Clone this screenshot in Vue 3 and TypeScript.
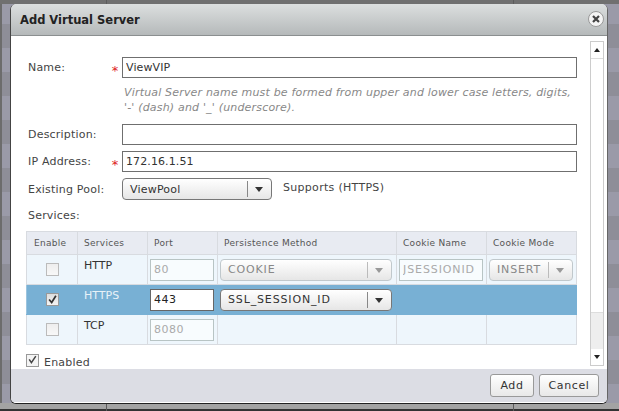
<script setup lang="ts">
interface Row {
  name: string
  port: string
  checked?: boolean
  active?: boolean
  method?: string
  cookie?: string
  mode?: string
}

const rows: Row[] = [
  { name: 'HTTP', port: '80', method: 'COOKIE', cookie: 'JSESSIONID', mode: 'INSERT' },
  { name: 'HTTPS', port: '443', checked: true, active: true, method: 'SSL_SESSION_ID' },
  { name: 'TCP', port: '8080' },
]
</script>

<template>
  <div class="page">
    <div class="dialog">
      <header class="title">
        <span>Add Virtual Server</span>
        <button class="close" aria-label="Close">
          <svg width="10" height="10" viewBox="0 0 10 10">
            <path d="M2 2l6 6M8 2l-6 6" stroke="#444" stroke-width="2.2" fill="none" />
          </svg>
        </button>
      </header>

      <div class="body">
        <div class="content">
          <div class="field">
            <label>Name:</label>
            <i class="req">*</i>
            <input class="text" value="ViewVIP" />
          </div>
          <p class="hint">
            Virtual Server name must be formed from upper and lower case letters, digits,<br />
            '-' (dash) and '_' (underscore).
          </p>
          <div class="field">
            <label>Description:</label>
            <i class="req"></i>
            <input class="text" value="" />
          </div>
          <div class="field ip">
            <label>IP Address:</label>
            <i class="req">*</i>
            <input class="text" value="172.16.1.51" />
          </div>
          <div class="field pool">
            <label>Existing Pool:</label>
            <i class="req"></i>
            <div class="select pool-select">
              <span class="value">ViewPool</span>
              <span class="arrow"></span>
            </div>
            <span class="supports">Supports (HTTPS)</span>
          </div>
          <div class="services">Services:</div>

          <table class="grid">
            <thead>
              <tr>
                <th class="c-enable">Enable</th>
                <th class="c-service">Services</th>
                <th class="c-port">Port</th>
                <th class="c-method">Persistence Method</th>
                <th class="c-cookie">Cookie Name</th>
                <th class="c-mode">Cookie Mode</th>
              </tr>
            </thead>
            <tbody>
              <tr v-for="row in rows" :key="row.name" :class="{ active: row.active }">
                <td class="center">
                  <span class="check" :class="{ on: row.checked }">
                    <svg v-if="row.checked" width="13" height="13" viewBox="0 0 13 13">
                      <path d="M2.5 6.5l3 3.5 5-8" stroke="#333" stroke-width="2" fill="none" />
                    </svg>
                  </span>
                </td>
                <td class="name">{{ row.name }}</td>
                <td class="pad">
                  <input class="cell-input" :disabled="!row.active" :value="row.port" />
                </td>
                <td class="pad">
                  <div v-if="row.method" class="select method" :class="{ off: !row.active }">
                    <span class="value">{{ row.method }}</span>
                    <span class="arrow"></span>
                  </div>
                </td>
                <td class="pad">
                  <input v-if="row.cookie" class="cell-input cookie" disabled :value="row.cookie" />
                </td>
                <td class="pad">
                  <div v-if="row.mode" class="select mode off">
                    <span class="value">{{ row.mode }}</span>
                    <span class="arrow"></span>
                  </div>
                </td>
              </tr>
            </tbody>
          </table>

          <div class="enabled">
            <span class="check plain">
              <svg width="15" height="15" viewBox="0 0 15 15">
                <path d="M3 6l3 4.5 6-9" stroke="#444" stroke-width="2" fill="none" />
              </svg>
            </span>
            <span class="enabled-text">Enabled</span>
          </div>
        </div>

        <div class="scrollbar">
          <span class="btn"><b class="up"></b></span>
          <span class="thumb"></span>
          <span class="rest"></span>
          <span class="btn"><b class="down"></b></span>
        </div>
      </div>

      <footer class="footer">
        <button class="action add">Add</button>
        <button class="action cancel">Cancel</button>
      </footer>
    </div>
  </div>
</template>

<style>
html,
body {
  margin: 0;
  background: #8c8c94;
}
</style>

<style scoped>
.page {
  width: 619px;
  height: 411px;
  box-sizing: border-box;
  padding: 4px 11px 8px 10px;
  background:
    linear-gradient(#5c5c5c, #5c5c5c) 106px 0 / 1px 4px no-repeat,
    linear-gradient(#5c5c5c, #5c5c5c) 513px 0 / 1px 4px no-repeat,
    linear-gradient(#5c5c5c, #5c5c5c) 106px 403px / 1px 8px no-repeat,
    linear-gradient(#5c5c5c, #5c5c5c) 513px 403px / 1px 8px no-repeat,
    linear-gradient(#707070, #707070) 0 0 / 100% 4px no-repeat,
    linear-gradient(#333, #333) 0 409px / 100% 2px no-repeat,
    linear-gradient(#a3a3a3, #a3a3a3) 0 403px / 100% 6px no-repeat,
    linear-gradient(#6c6c6c, #6c6c6c) 0 0 / 2px 100% no-repeat,
    repeating-linear-gradient(180deg, #9a9aa8 0 24px, #8e8e98 24px 48px);
  font-family: "DejaVu Sans", Verdana, sans-serif;
  font-size: 11px;
  color: #333;
  overflow: hidden;
}

.dialog {
  height: 100%;
  display: flex;
  flex-direction: column;
  background: #fff;
  border-left: 1px solid #444;
  border-right: 1px solid #666;
  border-bottom: 1px solid #222;
  border-radius: 6px;
  overflow: hidden;
}

.title {
  height: 32px;
  flex: none;
  box-sizing: border-box;
  display: flex;
  align-items: center;
  justify-content: space-between;
  padding: 0 3px 0 9px;
  background: linear-gradient(180deg, #dcdfdf, #b5b9ba);
  border-bottom: 1px solid #8b8f90;
  font-size: 11.5px;
  font-weight: bold;
  color: #222;
}

.close {
  width: 16px;
  height: 16px;
  margin-top: -2px;
  padding: 0;
  display: flex;
  align-items: center;
  justify-content: center;
  border: 1px solid #999;
  border-radius: 50%;
  background: #f4f4f4;
}

.body {
  flex: 1;
  min-height: 0;
  display: flex;
  overflow: hidden;
}

.content {
  flex: 1;
  min-width: 0;
  padding: 21px 0 0 17px;
  overflow: hidden;
}

.field {
  display: flex;
  align-items: center;
  height: 21px;
  color: #444;
}

.field label {
  width: 82px;
  letter-spacing: 0.2px;
}

.req {
  width: 10px;
  margin-right: 2px;
  color: #d22;
  font-style: normal;
  font-size: 13px;
  line-height: 13px;
  padding-top: 3px;
  text-align: center;
  height: 10px;
}

.text {
  width: 455px;
  height: 21px;
  box-sizing: border-box;
  border: 1px solid #6f6f6f;
  padding: 0 3px;
  font: inherit;
  letter-spacing: 0.1px;
  color: #333;
  outline: none;
  background: #fff;
}

.hint {
  margin: 0 0 0 96px;
  height: 46px;
  box-sizing: border-box;
  padding-top: 7px;
  line-height: 15px;
  font-style: italic;
  font-size: 11px;
  letter-spacing: 0.18px;
  color: #888;
  white-space: nowrap;
}

.ip {
  margin-top: 6px;
}

.pool {
  margin-top: 6px;
  height: 22px;
}

.select {
  display: flex;
  align-items: center;
  box-sizing: border-box;
  border: 1px solid #777;
  border-radius: 4px;
  background: linear-gradient(180deg, #fff, #e6e6e6);
  color: #333;
}

.select .value {
  flex: 1;
  padding-left: 7px;
  letter-spacing: 0.2px;
  white-space: nowrap;
  overflow: hidden;
}

.grid .select .value {
  letter-spacing: 0.85px;
}

.select .arrow {
  flex: none;
  width: 23px;
  height: 16px;
  border-left: 1px solid #888;
  position: relative;
}

.select .arrow::after {
  content: "";
  position: absolute;
  left: 7px;
  top: 6px;
  border: 4px solid transparent;
  border-top: 5px solid #333;
  border-bottom: 0;
}

.pool-select {
  width: 150px;
  height: 22px;
}

.supports {
  margin-left: 11px;
  margin-top: 3px;
  align-self: flex-start;
  letter-spacing: 0.3px;
}

.services {
  margin-top: 9px;
  height: 21px;
  color: #444;
  letter-spacing: 0.2px;
}

.grid {
  width: 551px;
  table-layout: fixed;
  border-collapse: collapse;
  margin-left: -2px;
  margin-top: 1px;
}

.grid th,
.grid td {
  border: 1px solid #d8dbe0;
  box-sizing: border-box;
  padding: 0;
}

.grid th {
  height: 23px;
  background: #e8ebf2;
  font-weight: normal;
  font-size: 9px;
  letter-spacing: 0.3px;
  color: #555;
  text-align: left;
  padding-left: 6px;
  white-space: nowrap;
}

.grid th.c-enable {
  padding-left: 7px;
}

.c-enable {
  width: 51px;
}

.c-service {
  width: 70px;
}

.c-port {
  width: 70px;
}

.c-method {
  width: 179px;
}

.c-cookie {
  width: 90px;
}

.grid td {
  height: 30px;
  background: #eef6fc;
  vertical-align: middle;
}

.grid tr.active td {
  background: #78b0d4;
  border-color: #78b0d4;
  border-left-color: #9cc4de;
}

.center {
  text-align: center;
}

.name {
  padding: 0 0 8px 6px !important;
  color: #333;
}

.active .name {
  color: #e8f2f8;
}

.pad {
  padding: 0 2px !important;
}

.check {
  display: inline-flex;
  align-items: center;
  justify-content: center;
  width: 13px;
  height: 13px;
  box-sizing: border-box;
  border: 1px solid #bbb;
  background: linear-gradient(180deg, #eee, #f8f8f8);
  vertical-align: middle;
}

.check.on {
  background: linear-gradient(180deg, #ddd, #f4f4f4);
  border-color: #999;
}

.check.plain {
  border-color: #999;
  background: #f4f4f4;
  flex: none;
}

.cell-input {
  display: block;
  width: 64px;
  height: 22px;
  margin: 0;
  box-sizing: border-box;
  padding: 0 3px;
  border: 1px solid #666;
  font: inherit;
  letter-spacing: 0.5px;
  color: #222;
  background: #fff;
  outline: none;
}

.cell-input:disabled {
  border-color: #b8c4c4;
  color: #aaa;
  background: #f8fcfe;
}

.cookie {
  width: 84px;
  letter-spacing: 0.9px;
}

.method {
  width: 172px;
  height: 22px;
}

.mode {
  width: 84px;
  height: 22px;
}

.off {
  border-color: #c0c8cc;
  color: #888;
}

.off .arrow {
  border-left-color: #bbb;
}

.off .arrow::after {
  border-top-color: #999;
}

.enabled {
  display: flex;
  align-items: flex-start;
  gap: 5px;
  margin: 9px 0 0 -2px;
  color: #444;
  letter-spacing: 0.2px;
}

.enabled-text {
  margin-top: 2px;
}

.scrollbar {
  flex: none;
  width: 12px;
  margin: 5px 3px 3px 0;
  display: flex;
  flex-direction: column;
  border: 1px solid #ccc;
  background: #fff;
}

.btn {
  height: 16px;
  flex: none;
  display: flex;
  align-items: center;
  justify-content: center;
}

.up {
  border: 3px solid transparent;
  border-bottom: 4px solid #222;
  border-top: 0;
}

.down {
  border: 3px solid transparent;
  border-top: 4px solid #222;
  border-bottom: 0;
}

.thumb {
  flex: 1;
  border-top: 1px solid #ddd;
  border-bottom: 1px solid #ddd;
}

.rest {
  height: 36px;
  background: #eee;
}

.footer {
  flex: none;
  height: 34px;
  box-sizing: border-box;
  display: flex;
  justify-content: flex-end;
  align-items: flex-start;
  gap: 5px;
  padding: 5px 8px 0 0;
  background: #dcdde4;
  border-bottom: 1px solid #fff;
}

.action {
  height: 23px;
  padding: 0;
  border: 1px solid #999;
  border-radius: 3px;
  background: linear-gradient(180deg, #fff, #e8e8e8);
  font: inherit;
  color: #333;
  letter-spacing: 0.6px;
}

.add {
  width: 44px;
}

.cancel {
  width: 60px;
}
</style>
